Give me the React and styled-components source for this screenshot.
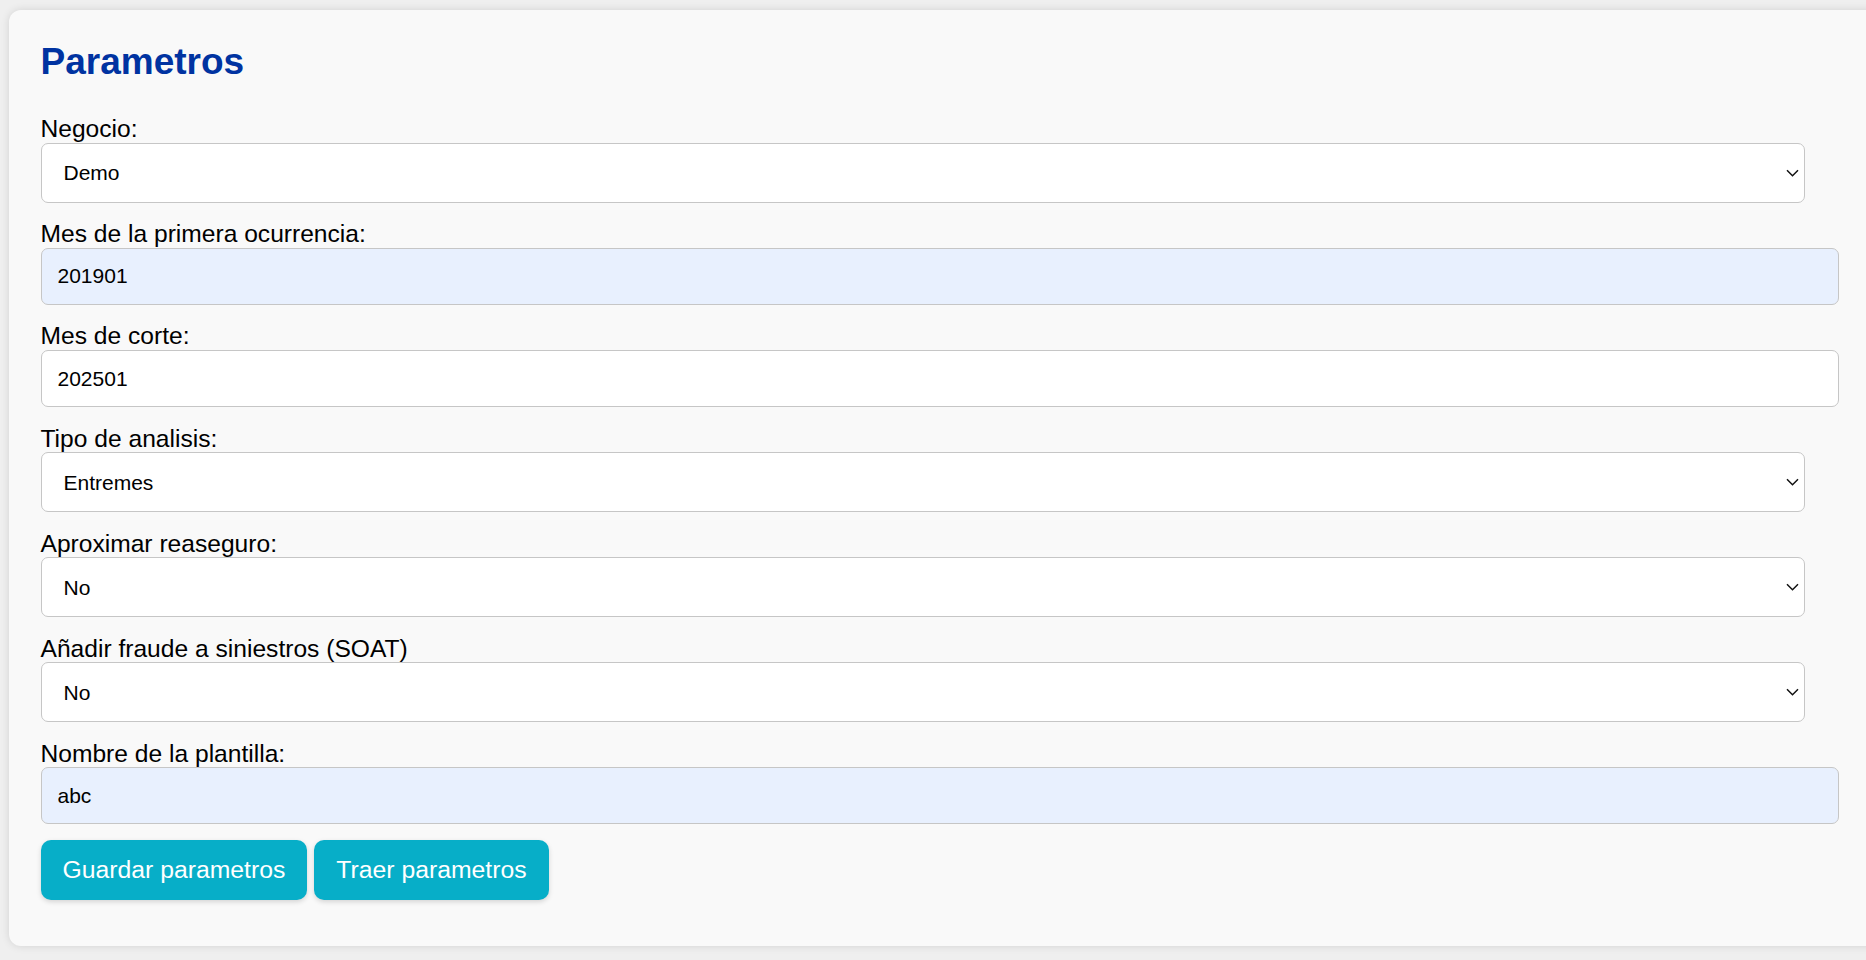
import React from "react";
import styled, { createGlobalStyle } from "styled-components";

const GlobalStyle = createGlobalStyle`
  html, body {
    margin: 0;
    background: #efefef;
    overflow: hidden;
  }
  body {
    font-family: "Liberation Sans", Arial, Helvetica, sans-serif;
    color: #000;
  }
`;

const Page = styled.div`
  padding: 10px 0 0 9px;
  height: 960px;
  box-sizing: border-box;
`;

const Card = styled.section`
  box-sizing: border-box;
  width: calc(100vw + 40px);
  background: #f9f9f9;
  border-radius: 12px;
  box-shadow: 0 0 8px rgba(0, 0, 0, 0.12);
  padding: 31px 0 46px 31.5px;
`;

const Title = styled.h2`
  margin: 0 0 32px;
  font-size: 37px;
  font-weight: 700;
  line-height: normal;
  color: #0033a1;
`;

const Form = styled.form`
  width: calc(100vw - 102px);
`;

const Label = styled.label`
  display: block;
  font-size: 24.6px;
  line-height: 27.6px;
`;

const SelectWrap = styled.div`
  position: relative;
  margin-bottom: 17.4px;
`;

const Select = styled.select`
  appearance: none;
  display: block;
  box-sizing: border-box;
  width: 100%;
  height: 60px;
  padding: 0 40px 0 22px;
  font-family: inherit;
  font-size: 21px;
  color: #000;
  background: #fff;
  border: 1px solid #c6c6c6;
  border-radius: 7px;
  outline: none;
`;

const Chevron = styled.svg`
  position: absolute;
  right: 6px;
  top: 50%;
  width: 13px;
  height: 8px;
  transform: translateY(-50%);
  pointer-events: none;
`;

const Input = styled.input`
  display: block;
  box-sizing: border-box;
  width: calc(100% + 34px);
  height: 57.3px;
  margin: 0 0 17.4px;
  padding: 0 16px;
  font-family: inherit;
  font-size: 21px;
  color: #000;
  background: ${(p) => (p.$filled ? "#e8f0fe" : "#fff")};
  border: 1px solid #c6c6c6;
  border-radius: 7px;
  outline: none;
`;

const Actions = styled.div`
  display: flex;
  gap: 7px;
  margin-top: -1.4px;
`;

const Button = styled.button`
  height: 60px;
  padding: 0 22px;
  font-family: inherit;
  font-size: 24.75px;
  color: #fff;
  background: #07aec8;
  border: none;
  border-radius: 10px;
  box-shadow: 0 2px 5px rgba(0, 0, 0, 0.15);
  cursor: pointer;
`;

const Field = ({ label, options }) => (
  <>
    <Label>{label}</Label>
    <SelectWrap>
      <Select defaultValue={options[0]}>
        {options.map((o) => (
          <option key={o}>{o}</option>
        ))}
      </Select>
      <Chevron viewBox="0 0 13 8">
        <path d="M1 1.2l5.5 5.5 5.5-5.5" fill="none" stroke="#111" strokeWidth="1.5" />
      </Chevron>
    </SelectWrap>
  </>
);

const App = () => (
  <Page>
    <GlobalStyle />
    <Card>
      <Title>Parametros</Title>
      <Form onSubmit={(e) => e.preventDefault()}>
        <Field label="Negocio:" options={["Demo"]} />
        <Label>Mes de la primera ocurrencia:</Label>
        <Input $filled defaultValue="201901" />
        <Label>Mes de corte:</Label>
        <Input defaultValue="202501" />
        <Field label="Tipo de analisis:" options={["Entremes"]} />
        <Field label="Aproximar reaseguro:" options={["No", "Si"]} />
        <Field label="Añadir fraude a siniestros (SOAT)" options={["No", "Si"]} />
        <Label>Nombre de la plantilla:</Label>
        <Input $filled defaultValue="abc" />
        <Actions>
          <Button type="button">Guardar parametros</Button>
          <Button type="button">Traer parametros</Button>
        </Actions>
      </Form>
    </Card>
  </Page>
);

export default App;
